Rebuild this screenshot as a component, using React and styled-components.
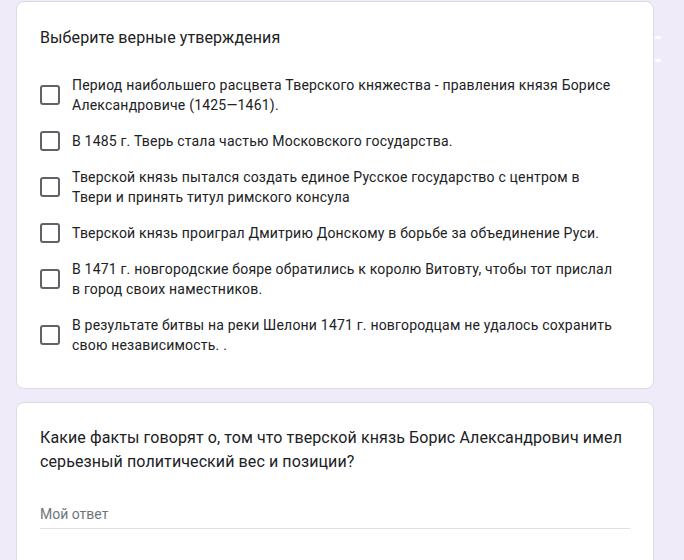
import React from "react";
import styled, { createGlobalStyle } from "styled-components";

const GlobalStyle = createGlobalStyle`
  html, body {
    margin: 0;
    padding: 0;
    background: #f0ebf8;
  }
  body {
    font-family: Roboto, "Noto Sans", Arial, sans-serif;
    color: #202124;
  }
`;

const Page = styled.div`
  width: 684px;
  height: 560px;
  overflow: hidden;
  padding: 1px 0 0 16px;
  box-sizing: border-box;
  display: flex;
  flex-direction: column;
  gap: 13px;
  position: relative;
`;

const Card = styled.div`
  width: 638px;
  box-sizing: border-box;
  background: #fff;
  border: 1px solid #dadce0;
  border-radius: 8px;
  padding: ${({ $pad }) => $pad};
  flex-shrink: 0;
`;

const Title = styled.div`
  font-size: 16px;
  line-height: 24px;
  letter-spacing: 0.1px;
  color: #202124;
  margin-bottom: ${({ $mb }) => $mb || "0"};
`;

const OptionList = styled.div`
  display: flex;
  flex-direction: column;
`;

const Option = styled.label`
  display: flex;
  align-items: center;
  gap: 12px;
  padding: 8px 0;
`;

const Box = styled.span`
  width: 20px;
  height: 20px;
  box-sizing: border-box;
  border: 2px solid #5f6368;
  border-radius: 3px;
  flex-shrink: 0;
`;

const OptionText = styled.span`
  font-size: 14px;
  line-height: 20px;
  letter-spacing: 0.2px;
  color: #202124;
  max-width: 548px;
`;

const Answer = styled.div`
  width: 590px;
  border-bottom: 1px solid #e0e0e0;
  padding-bottom: 4px;
  font-size: 14px;
  line-height: 20px;
  color: #70757a;
`;

const Mark = styled.span`
  position: absolute;
  left: 655px;
  top: ${({ $top }) => $top}px;
  width: 6px;
  height: 3px;
  border-radius: 2px;
  background: #ffffff;
`;

const options = [
  "Период наибольшего расцвета Тверского княжества - правления князя Борисе Александровиче (1425—1461).",
  "В 1485 г. Тверь стала частью Московского государства.",
  "Тверской князь пытался создать единое Русское государство с центром в Твери и принять титул римского консула",
  "Тверской князь проиграл Дмитрию Донскому в борьбе за объединение Руси.",
  "В 1471 г. новгородские бояре обратились к королю Витовту, чтобы тот прислал в город своих наместников.",
  "В результате битвы на реки Шелони 1471 г. новгородцам не удалось сохранить свою независимость. .",
];

export default function App() {
  return (
    <>
      <GlobalStyle />
      <Page>
        <Card $pad="24px 24px 25px 23px">
          <Title $mb="17px">Выберите верные утверждения</Title>
          <OptionList>
            {options.map((text) => (
              <Option key={text}>
                <Box />
                <OptionText>{text}</OptionText>
              </Option>
            ))}
          </OptionList>
        </Card>
        <Card $pad="23px 24px 40px 23px">
          <Title $mb="30px">
            Какие факты говорят о, том что тверской князь Борис Александрович имел серьезный политический вес и позиции?
          </Title>
          <Answer>Мой ответ</Answer>
        </Card>
        <Mark $top={36} />
        <Mark $top={59} />
      </Page>
    </>
  );
}
